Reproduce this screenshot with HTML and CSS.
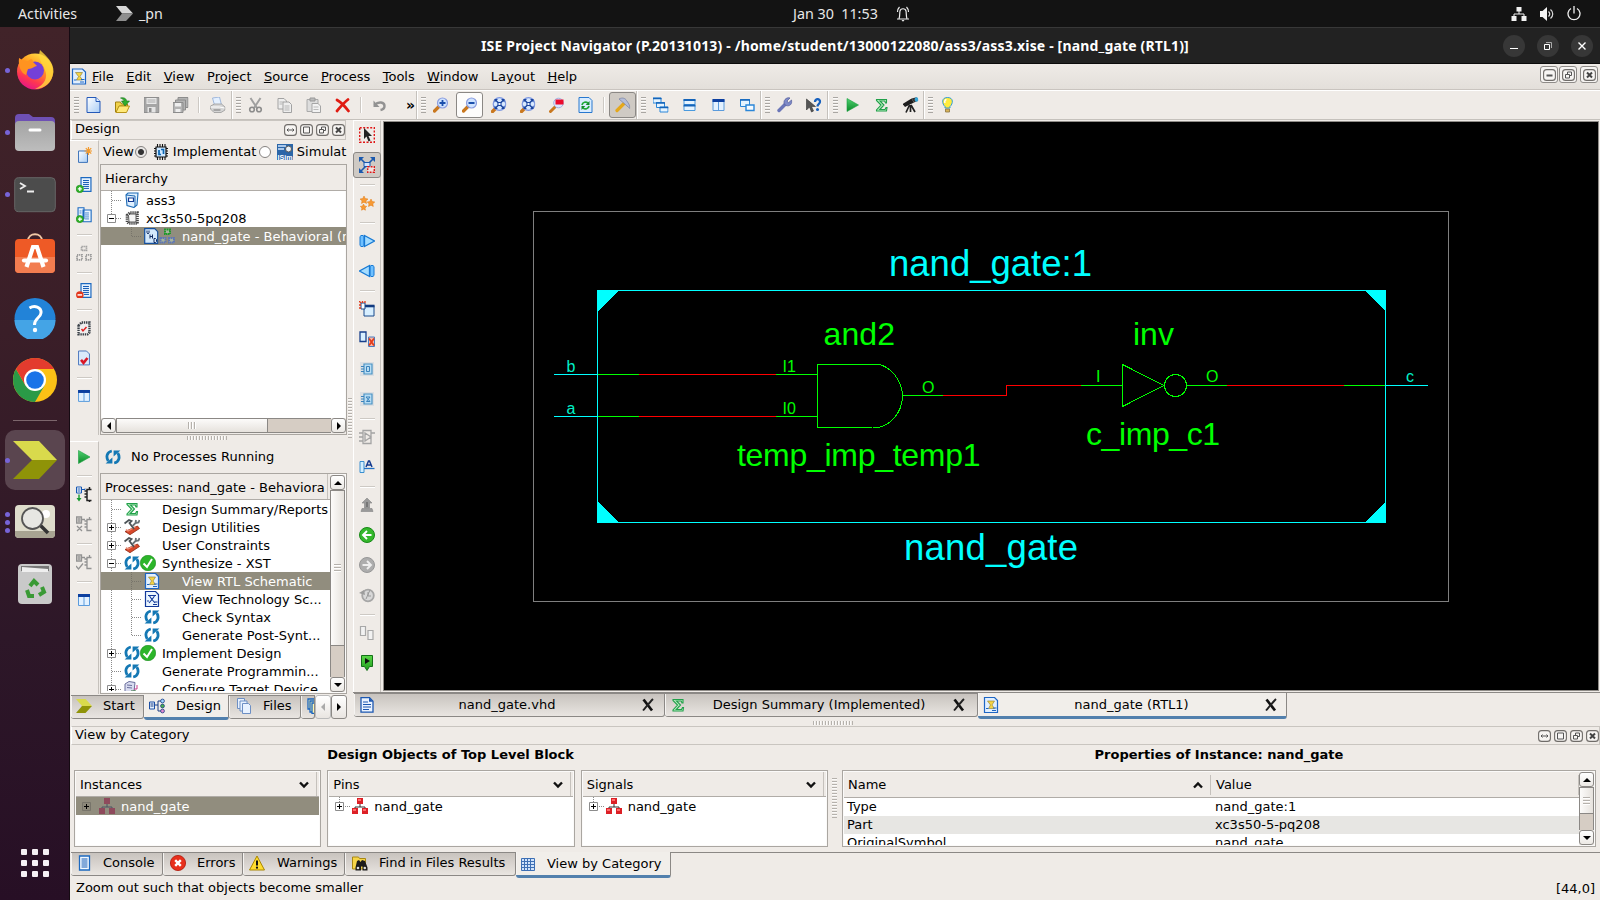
FILE: index.html
```html
<!DOCTYPE html>
<html lang="en">
<head>
<meta charset="utf-8">
<title>ISE Project Navigator</title>
<link rel="stylesheet" href="styles.css">
</head>
<body>
<svg class="defs" width="0" height="0">
<defs>
<linearGradient id="gPage" x1="0" y1="0" x2="1" y2="1"><stop offset="0" stop-color="#fff"/><stop offset="1" stop-color="#a9cdf5"/></linearGradient>
<linearGradient id="gGreen" x1="0" y1="0" x2="0" y2="1"><stop offset="0" stop-color="#5bd84a"/><stop offset="1" stop-color="#1f9a1c"/></linearGradient>
<linearGradient id="gTri" x1="0" y1="0" x2="0" y2="1"><stop offset="0" stop-color="#4fd070"/><stop offset="1" stop-color="#0a8a28"/></linearGradient>
<linearGradient id="gFox" x1="0.8" y1="0" x2="0.3" y2="1"><stop offset="0" stop-color="#ffe94a"/><stop offset=".4" stop-color="#ff9a1f"/><stop offset=".75" stop-color="#ff3750"/><stop offset="1" stop-color="#e3158a"/></linearGradient>
<linearGradient id="gGrey" x1="0" y1="0" x2="0" y2="1"><stop offset="0" stop-color="#a3a3a3"/><stop offset="1" stop-color="#bdbdbd"/></linearGradient>
</defs>
<symbol id="page" viewBox="0 0 16 16"><path d="M1.500.5h9l4 4v11h-13z" fill="url(#gPage)" stroke="#2459b8"/><path d="M10.500.5v4h4" fill="#dcebff" stroke="#2459b8"/></symbol>
<symbol id="open" viewBox="0 0 16 16"><path d="M1 5h5l1 2h6v2H5l-3 6H1z" fill="#f2d24a" stroke="#a08010"/><path d="M4.500 9h10.500l-3 6.500H1.500z" fill="#ffe979" stroke="#b8941a"/><path d="M6 1c4-1 6 1 6 3h3l-4.500 5L7 4h2.500C9.500 3 8 1.500 6 1z" fill="#2fae2f" stroke="#17751a" stroke-width=".6"/></symbol>
<symbol id="save" viewBox="0 0 16 16"><path d="M.5.5h15v15h-15z" fill="#a5a5a5" stroke="#8e8e8e"/><path d="M3 1h10v6H3z" fill="#e9e9e9"/><path d="M4 3h8M4 5h8" stroke="#aaa"/><path d="M4 10h8v5.500H4z" fill="#e4e4e4"/><path d="M5.500 11h2.500v4H5.500z" fill="#8e8e8e"/></symbol>
<symbol id="saveall" viewBox="0 0 16 16"><g fill="#b3b3b3" stroke="#8c8c8c"><path d="M5.500.5h10v10h-10z"/><path d="M3 3h10v10H3z"/><path d="M.5 5.500h10v10H.5z"/></g><path d="M2.500 6h6v3.500h-6zM3 12h5v3H3z" fill="#eee"/></symbol>
<symbol id="print" viewBox="0 0 16 16"><path d="M3 1l7-1 2 8H5z" fill="#e4f0ff" stroke="#8eabd6" stroke-width=".8"/><path d="M1 9l4-2h7l3.500 3v3l-4 2.500h-7L1 12z" fill="#d5d5d5" stroke="#999" stroke-width=".8"/><path d="M1 10h9l5 1" stroke="#fff" fill="none"/><path d="M4 13h7" stroke="#777"/></symbol>
<symbol id="cut" viewBox="0 0 16 16"><path d="M3 1l6.500 10M13 1L6.500 11" stroke="#a0a0a0" stroke-width="2" fill="none"/><circle cx="4.500" cy="12.500" r="2.300" fill="none" stroke="#8c8c8c" stroke-width="1.600"/><circle cx="11.500" cy="12.500" r="2.300" fill="none" stroke="#8c8c8c" stroke-width="1.600"/></symbol>
<symbol id="copy" viewBox="0 0 16 16"><g fill="#eee" stroke="#a2a2a2"><path d="M1.500 1.500h6l2.500 2.500v8h-8.500z"/><path d="M6.500 5h6l2.500 2.500v8H6.500z"/></g><path d="M3 5h4M3 7h3M8 9h5M8 11h5M8 13h5" stroke="#b5b5b5"/></symbol>
<symbol id="paste" viewBox="0 0 16 16"><path d="M1.500 2.500h11v12h-11z" fill="#ddd" stroke="#aaa"/><path d="M4.500 1h5v3h-5z" fill="#bbb" stroke="#999"/><path d="M6.500 6.500h6l2.500 2.500v6.500H6.500z" fill="#f2f2f2" stroke="#a5a5a5"/><path d="M8 10h5M8 12.500h5" stroke="#bbb"/></symbol>
<symbol id="del" viewBox="0 0 16 16"><path d="M2.500 3C6 5 11 10 14 14M13.500 2.500C9 6 5 11 2.500 14" stroke="#e01b12" stroke-width="2.800" stroke-linecap="round" fill="none"/></symbol>
<symbol id="undo" viewBox="0 0 16 16"><path d="M3 8c4-4 10-3 10 1 0 2-1.500 3.500-4 4" fill="none" stroke="#929292" stroke-width="2.400"/><path d="M2 3.500V10h6z" fill="#929292"/></symbol>
<symbol id="lens" viewBox="0 0 16 16"><path d="M6.500 9.500L2 14" stroke="#c9781f" stroke-width="3.200" stroke-linecap="round"/><circle cx="10" cy="6" r="5" fill="#cfe3ff" stroke="#8c9ee0" stroke-width="1.200"/></symbol>
<symbol id="zin" viewBox="0 0 16 16"><use href="#lens"/><path d="M7 6h6M10 3v6" stroke="#1b4fac" stroke-width="1.800"/></symbol>
<symbol id="zout" viewBox="0 0 16 16"><use href="#lens"/><path d="M7 6h6" stroke="#1b4fac" stroke-width="1.800"/></symbol>
<symbol id="zfull" viewBox="0 0 16 16"><path d="M5 11.500l-3 3" stroke="#c9781f" stroke-width="3.400" stroke-linecap="round"/><circle cx="9" cy="7" r="6.300" fill="#d8e9ff" stroke="#7c96e0" stroke-width="1.200"/><path d="M5 3l8 8M13 3l-8 8" stroke="#1c46a0" stroke-width="1.500"/><path d="M4 2h3.500L4 5.500zM14 2v3.500L10.500 2zM14 12h-3.500L14 8.500zM4 12V8.500L7.500 12z" fill="#1c46a0"/><path d="M7.500 5.500h3v3h-3z" fill="#e6f0ff" stroke="#1c46a0"/></symbol>
<symbol id="zbox" viewBox="0 0 16 16"><path d="M6.500 10L2 14.500" stroke="#c9781f" stroke-width="3" stroke-linecap="round"/><circle cx="10" cy="6" r="4.800" fill="#dbe6ff" stroke="#a2b2e0"/><path d="M7 2.500h8v5H7z" fill="#ec0a2c"/></symbol>
<symbol id="refreshpg" viewBox="0 0 16 16"><path d="M1.500.5h10l3 3v12h-13z" fill="#d9ecff" stroke="#2878cf"/><path d="M4.500 8c.5-3 4-3.800 6-1.800M11.500 9c-.5 3-4 3.800-6 1.800" stroke="#1fa83a" stroke-width="1.700" fill="none"/><path d="M12 4v4H8.200zM4 13V9h3.800z" fill="#138a2c"/></symbol>
<symbol id="hammer" viewBox="0 0 16 16"><path d="M9.500 6.500L2.500 13.500" stroke="#e5a81b" stroke-width="3.200" stroke-linecap="round"/><path d="M4.500 2C8 0 11 1.500 12 3.500c1.500 2 3.500 4.500 3.500 8l-3-2.500L8 5z" fill="#b4bdd8" stroke="#7680a0" stroke-width=".7"/></symbol>
<symbol id="cascade" viewBox="0 0 16 16"><g fill="#e6f4ff" stroke="#2b86d8"><path d="M.5 1h8v5h-8z"/><path d="M4 5.500h8v5H4z"/><path d="M7.500 10h8v5h-8z"/></g><path d="M0 1.500h9M3.500 6h9M7 10.500h9" stroke="#1463b8" stroke-width="1.600"/></symbol>
<symbol id="tileh" viewBox="0 0 16 16"><g fill="#e6f4ff" stroke="#4a9ade"><path d="M2.500 2.500h11v5h-11zM2.500 8.500h11v5h-11z"/></g><path d="M2 3h12M2 8.500h12" stroke="#1463b8" stroke-width="1.800"/></symbol>
<symbol id="tilev" viewBox="0 0 16 16"><path d="M2.500 2.500h11v11h-11z" fill="#e3f1ff" stroke="#5b9bdc"/><path d="M8 3v10" stroke="#5b9bdc"/><path d="M2 3.500h12" stroke="#0c3f9f" stroke-width="3"/></symbol>
<symbol id="float" viewBox="0 0 16 16"><path d="M1 2.500h9v7H1z" fill="#e6f4ff" stroke="#2b86d8"/><path d="M.5 3h10" stroke="#1463b8" stroke-width="1.600"/><path d="M6.500 8h8v5.500h-8z" fill="#f4faff" stroke="#2b86d8" stroke-width="1.400"/></symbol>
<symbol id="wrench" viewBox="0 0 16 16"><path d="M2.500 13.500L9 7" stroke="#6b76b8" stroke-width="3.400" stroke-linecap="round"/><path d="M13.500 1L10.500 4l1.500 1.800L15 3c1 3-1 6-4 5.800C7.500 8.500 6.500 5 8.500 2.500 9.700 1 12 .3 13.500 1z" fill="#7e8ac8" stroke="#505a9a" stroke-width=".7"/></symbol>
<symbol id="whats" viewBox="0 0 16 16"><path d="M1 2v11l3-3 2 5 2-1-2-4.500h4z" fill="#555" stroke="#333" stroke-width=".6"/><path d="M9.500 5c0-4 5.500-3.500 5 0-.2 2-2.500 2.200-2.500 4.500" stroke="#1760bd" stroke-width="2.300" fill="none"/><circle cx="12" cy="12.500" r="1.500" fill="#1760bd"/></symbol>
<symbol id="play" viewBox="0 0 16 16"><path d="M2.500 1.500L14 8 2.500 14.500z" fill="url(#gTri)" stroke="#19a040" stroke-width=".6"/></symbol>
<symbol id="sigma" viewBox="0 0 16 16"><path d="M3 2.500h10v3.500h-1l-.8-2H6.500l4 4-4.200 4.500h5.200l1-2H13.500l-.5 3.500H3v-1l4.500-5L3 3.500z" fill="#b8efc2" stroke="#22a04a" stroke-width="1.100"/></symbol>
<symbol id="scope" viewBox="0 0 16 16"><path d="M0 7l9-5.500 2.500 4L2.500 10z" fill="#1e1e1e"/><path d="M9 1.500L14 .2 15.800 3.500 11.500 5.500z" fill="#333"/><ellipse cx="14" cy="2.500" rx="1.800" ry="2.300" fill="#35a6d8"/><path d="M7 8l-3.500 7.500M8 8v7M8.500 8l4 7" stroke="#222" stroke-width="1.700"/></symbol>
<symbol id="bulb" viewBox="0 0 16 16"><path d="M8 .5C1.500.5 2.500 7 5.500 9.500V11h5V9.500C13.500 7 14.500.5 8 .5z" fill="#ffec3d" stroke="#2f9ad8"/><path d="M7 2.500C5 3 5 5 5.500 6" stroke="#fff" stroke-width="1.500" fill="none"/><path d="M6 12h4v3H6z" fill="#d8b45a" stroke="#8b7440" stroke-width=".8"/></symbol>
<symbol id="newsrc" viewBox="0 0 16 16"><path d="M2.500 4h9v11.500h-9z" fill="url(#gPage)" stroke="#3b72b8"/><path d="M12.500 0v8M8.500 4h8M9.800 1.200l5.500 5.500M15.300 1.200L9.800 6.700" stroke="#f29a2e" stroke-width="1.200"/></symbol>
<symbol id="doc" viewBox="0 0 16 16"><path d="M3.500 1h10v14h-10z" fill="#f4faff" stroke="#1c69c0" stroke-width="1.300"/><path d="M5.500 4h6M5.500 6h6M5.500 8h6M5.500 10h6M5.500 12h6" stroke="#1058b4"/></symbol>
<symbol id="addsrc" viewBox="0 0 16 16"><path d="M5 .7h10v13.800H5z" fill="#eaf5ff" stroke="#1c69c0" stroke-width="1.200"/><path d="M7 3.500h6M7 5.500h6M7 7.500h6M7 9.500h6M8 11.500h5" stroke="#1058b4"/><circle cx="3.800" cy="12" r="3.700" fill="#35b52d" stroke="#1c8c1a" stroke-width=".7"/><path d="M1.800 12h4M3.800 10v4" stroke="#fff" stroke-width="1.300"/></symbol>
<symbol id="addcopy" viewBox="0 0 16 16"><path d="M2 .8h6v11H2zM7 3h8.200v11.800H7z" fill="#eaf5ff" stroke="#1c69c0" stroke-width="1.100"/><path d="M9 6h4M9 8h4M9 10h4M9 12h4M3.500 4h2M3.500 6h2" stroke="#4d8ad0"/><circle cx="3.800" cy="12.200" r="3.600" fill="#35b52d" stroke="#1c8c1a" stroke-width=".7"/><path d="M2 12.200h4M3.800 10.200v4" stroke="#fff" stroke-width="1.300"/></symbol>
<symbol id="rmsrc" viewBox="0 0 16 16"><path d="M5 .7h10v13.800H5z" fill="#eaf5ff" stroke="#1c69c0" stroke-width="1.200"/><path d="M7 3.500h6M7 5.500h6M7 7.500h6M7 9.500h6M8 11.500h5" stroke="#1058b4"/><circle cx="3.800" cy="12" r="3.800" fill="#e2361c"/><path d="M1.500 12h4.600" stroke="#fff" stroke-width="1.500"/></symbol>
<symbol id="blocksg" viewBox="0 0 16 16"><g fill="none" stroke="#999" stroke-width="1.700" stroke-dasharray="1.300 .7"><path d="M5.500 1.500h5v4h-5zM1 10h5v5H1zM10 10h5v5h-5z"/></g></symbol>
<symbol id="chipchk" viewBox="0 0 16 16"><path d="M2.500 5.500l3-3h8v10l-2 2h-9z" fill="#eee" stroke="#3a4148" stroke-width="2.400" stroke-dasharray="1.400 .8"/><path d="M5.500 9l1.500 2 3.500-4" stroke="#e02020" stroke-width="1.500" fill="none"/></symbol>
<symbol id="pagechk" viewBox="0 0 16 16"><path d="M2.500 1h8l3 3v11h-11z" fill="#dbeafc" stroke="#5079be"/><path d="M5 10l2.500 3L11.500 8" stroke="#d91626" stroke-width="2.600" fill="none"/></symbol>
<symbol id="chip" viewBox="0 0 16 16"><path d="M3 3h10v10H3z" fill="#cfe8ff" stroke="#111" stroke-width="1.200"/><path d="M1 4.500h2M1 7h2M1 9.500h2M1 12h2M13 4.500h2M13 7h2M13 9.500h2M13 12h2M4.500 0v3M7 0v3M9.500 0v3M12 0v3M4.500 13v3M7 13v3M9.500 13v3M12 13v3" stroke="#111" stroke-width="1.100"/><path d="M6 6v4.500h2M8 5.500h2.500V10" stroke="#0a66b4" stroke-width="1.700" fill="none"/></symbol>
<symbol id="isim" viewBox="0 0 16 16"><path d="M0 0h16v16H0z" fill="#2b66a8"/><path d="M1 2h8M1 5h6" stroke="#d4e8ff" stroke-width="1.500"/><circle cx="11.500" cy="5" r="3" fill="#e8f0f8" stroke="#555"/><text x="8" y="15.500" font-size="8" font-weight="bold" text-anchor="middle" fill="#fff" font-family="Liberation Sans, sans-serif" textLength="15" lengthAdjust="spacingAndGlyphs">ISim</text></symbol>
<symbol id="proj" viewBox="0 0 16 16"><path d="M2 3l2-2h10l-1 12-3 2.500-7-2z" fill="#dff0ff" stroke="#1d6ab5" stroke-width="1.100"/><path d="M2 3l9 1v11" stroke="#1d6ab5" fill="none"/><path d="M4.500 6h5v3.500h-5z" fill="#fff" stroke="#123a94" stroke-width="1.200"/></symbol>
<symbol id="dev" viewBox="0 0 16 16"><path d="M3 5l3-2.500h7.500v11h-9L3 12z" fill="#fff" stroke="#474747" stroke-width="2.600" stroke-dasharray="1.300 .8"/><path d="M4.500 5.500L6 4h6v8H5z" fill="#f6f6f6" stroke="#333" stroke-width=".8"/></symbol>
<symbol id="vhd" viewBox="0 0 31 16"><path d="M.7.700h10l3 3v11.600H.7z" fill="#d4e9fc" stroke="#14509e" stroke-width="1.200"/><path d="M3 2.500v2l1 1.500 1-1.500v-2M6 6.500v4M6 8.500h2.500M8.500 6.500v4M10 10.500v4h1.500l1-1v-2l-1-1z" stroke="#102a60" fill="none"/><g fill="#a9b49c" stroke-width="2" stroke-dasharray="1.500 .5"><path d="M21 1.500h5v4.500h-5z" stroke="#1f9a2a"/><path d="M16.500 10h5v4.500h-5zM25 10h5v4.500h-5z" stroke="#5f77b4"/></g></symbol>
<symbol id="loop" viewBox="0 0 16 16"><path d="M6.800 2C1.800 3 .8 8 3.200 12M9.200 14c5-1 6-6 3.600-10" stroke="#1478b4" stroke-width="2.800" fill="none"/><path d="M.6 14.600h6.800V8.400zM15.400 1.400H8.600v6.200z" fill="#1478b4"/></symbol>
<symbol id="ok" viewBox="0 0 16 16"><circle cx="8" cy="8" r="7.700" fill="#2cb52a" stroke="#168a18" stroke-width=".6"/><path d="M3.500 8.500L7 12l5-8" stroke="#fff" stroke-width="2" fill="none"/></symbol>
<symbol id="tools" viewBox="0 0 16 16"><path d="M1 12.500L13.500 7l2 2.500-9.500 6.200z" fill="#d8482a" stroke="#8f2a14" stroke-width=".8"/><path d="M2 10.500l2 1.500 8-4.500" stroke="#f09078" stroke-width="1.300" fill="none"/><path d="M.5 4.500L5 1l2.500 1L5.500 4l4.500 6" stroke="#4c5357" stroke-width="1.800" fill="none"/><path d="M8.500 7l3-3 3-.5L15.500 1M11.500 4l.5-3" stroke="#6a7175" stroke-width="1.800" fill="none"/></symbol>
<symbol id="rtl" viewBox="0 0 16 16"><path d="M1.500.5h10l3 3v12h-13z" fill="#e1effe" stroke="#1e66c4" stroke-width="1.200"/><path d="M4.500 4h7L9 8l2.500 3.500h-6L7.500 8z" fill="#f5d344" stroke="#8a7a30" stroke-width=".6"/><path d="M3 11.500h2.500M10 11h3.500M9 13.500h4" stroke="#1e66c4"/></symbol>
<symbol id="tech" viewBox="0 0 16 16"><path d="M1.500.5h10l3 3v12h-13z" fill="#eaf5ff" stroke="#12389a" stroke-width="1.200"/><path d="M4 4.500h8M5.500 5L8 8.500 10.500 5M8 8.500l3 3.500M8 8.500L5 12M3 10h2M10 11h3.500M9 13.500h4" stroke="#12389a" stroke-width="1.100" fill="none"/></symbol>
<symbol id="target" viewBox="0 0 16 16"><path d="M1 3l4-2.500 6 1-1 9-5 2-4-1z" fill="#d9dcf0" stroke="#6a6f9c"/><path d="M3 4l5 .5M3 6.500l5 .5" stroke="#6a6f9c"/><path d="M10 8h3V4" stroke="#c73a8a" fill="none"/><path d="M7 10h5v5H7z" fill="#4fae4a" stroke="#2a702a"/></symbol>
<symbol id="implrun" viewBox="0 0 16 16"><path d="M.5 1h5v6h-5z" fill="#fff" stroke="#1657b2"/><path d="M1.500 3h3M1.500 5h3M6 3.500h3v-1" stroke="#1657b2" fill="none"/><path d="M3 8.500v5" stroke="#179a30" stroke-width="1.400"/><path d="M.5 12h5L3 15.500z" fill="#179a30"/><path d="M15.500 3.500H11v11h4.500M8.500 5H11M8.500 8H11M8.500 11H11M13.500 1v2M13.500 15v1" stroke="#222" stroke-width="1.500" fill="none"/></symbol>
<symbol id="implx" viewBox="0 0 16 16"><path d="M.5 1h5v6h-5zM1.500 3h3M1.500 5h3M6 3.500h3M1 10l5 5M6 10l-5 5M15.500 3.500H11v11h4.500M8.500 5H11M8.500 8H11M8.500 11H11M13.500 1v2" stroke="#929292" stroke-width="1.300" fill="none"/></symbol>
<symbol id="implc" viewBox="0 0 16 16"><path d="M.5 1h5v6h-5zM1.500 3h3M1.500 5h3M6 3.500h3M0 12l2.500 3L7 9.500M15.500 3.500H11v11h4.500M8.500 5H11M8.500 8H11M8.500 11H11M13.500 1v2" stroke="#929292" stroke-width="1.300" fill="none"/></symbol>
<symbol id="chev" viewBox="0 0 16 16"><path d="M0 1h9.500L16 8H6z" fill="#d9da4c"/><path d="M6 8h10l-6.500 7H0z" fill="#8f9308"/></symbol>
<symbol id="hier" viewBox="0 0 16 16"><path d="M.5 4h5v7h-5z" fill="#e5f1ff" stroke="#1c4fa5"/><path d="M1.500 6h3M1.500 8h3M6 7h3M9 3v10M9 3h3M9 13h3" stroke="#1c3f85" fill="none"/><circle cx="13.500" cy="3" r="1.900" fill="#9fd3ff" stroke="#1c3f85" stroke-width=".8"/><circle cx="13.500" cy="8" r="1.900" fill="#4bb04b" stroke="#1c3f85" stroke-width=".8"/><circle cx="13.500" cy="13" r="1.900" fill="#e08ad0" stroke="#1c3f85" stroke-width=".8"/></symbol>
<symbol id="files" viewBox="0 0 16 16"><g fill="#e8f2ff" stroke="#6d8fc4"><path d="M1.500.5h7v10h-7z"/><path d="M4 3h7v10H4z"/><path d="M6.500 5.500h6l2 2v8h-8z"/></g></symbol>
<symbol id="libs" viewBox="0 0 8 16"><g fill="#fff7b0" stroke="#1763c0" stroke-width="1.300"><path d="M1 1h8v10H1z"/><path d="M3 3h8v11H3z"/><path d="M5 5h8v10.500H5z"/></g></symbol>
<symbol id="red3" viewBox="0 0 16 16"><path d="M8 5v4M3 12V9h10v3" stroke="#333" fill="none"/><path d="M5 0h6v6H5zM0 10h6v6H0zM10 10h6v6h-6z" fill="#dc2026"/><path d="M6 1h3v2H6zM1 11h3v2H1zM11 11h3v2h-3z" fill="#ff6b6b"/></symbol>
<symbol id="red3d" viewBox="0 0 16 16"><path d="M8 5v4M3 12V9h10v3" stroke="#4b5563" fill="none"/><path d="M5 0h6v6H5zM0 10h6v6H0zM10 10h6v6h-6z" fill="#8e4a5c"/></symbol>
<symbol id="err" viewBox="0 0 16 16"><circle cx="8" cy="8" r="7.600" fill="#e8301c" stroke="#b01408" stroke-width=".8"/><path d="M5.200 5.200l5.600 5.600M10.800 5.200l-5.600 5.600" stroke="#fff" stroke-width="2.400"/></symbol>
<symbol id="warn" viewBox="0 0 16 16"><path d="M8 1L15.500 15H.5z" fill="#ffdc2e" stroke="#a98600"/><path d="M8 5.500v5" stroke="#111" stroke-width="2"/><circle cx="8" cy="12.700" r="1.100" fill="#111"/></symbol>
<symbol id="find" viewBox="0 0 16 16"><path d="M.5 2h6l1 1.500h6V14H.5z" fill="#f6d548" stroke="#a88712"/><path d="M5 6l2-1 1.500 2L10 5l3 1 2.500 6.500v3h-5v-4H9v4H3.500v-3z" fill="#1b1b1b"/><circle cx="6" cy="13" r="1.300" fill="#ddd"/><circle cx="12.800" cy="13" r="1.300" fill="#ddd"/></symbol>
<symbol id="gridic" viewBox="0 0 16 16"><path d="M1.500 2.500h13v12h-13z" fill="#cfe2fb" stroke="#3d6fb4"/><path d="M4.500 2v12.500M7.500 2v12.500M10.500 2v12.500M1 5.500h13.500M1 8.500h13.500M1 11.500h13.500" stroke="#3d6fb4"/></symbol>
<symbol id="vdoc" viewBox="0 0 16 16"><path d="M2 .7h8.500l3.500 3.500v11H2z" fill="#eaf3ff" stroke="#1c57b0" stroke-width="1.300"/><path d="M10 .7v4h4z" fill="#1c57b0"/><path d="M4 5h5M4 7.500h8M4 10h8M4 12.500h6" stroke="#1c57b0"/></symbol>
<symbol id="closex" viewBox="0 0 14 14"><path d="M2.500 1.500L11 12.500" stroke="#111" stroke-width="2.700"/><path d="M12 1C9 4 5 9 2 12.500" stroke="#222" stroke-width="1.900" fill="none"/></symbol>
<symbol id="selarr" viewBox="0 0 16 16"><path d="M.7.700h14.600v14.600H.7z" fill="none" stroke="#e01818" stroke-width="1.400" stroke-dasharray="2 1.500"/><path d="M5 1v11l2.500-2.500 2 5 2-1-2-4.500H13z" fill="#222"/></symbol>
<symbol id="zoomsel" viewBox="0 0 16 16"><path d="M2 2l11 11M14 2L2 14" stroke="#1b59ad" stroke-width="1.600"/><path d="M0 0h5L0 5zM16 0v5l-5-5zM0 16v-5l5 5z" fill="#1b59ad"/><path d="M5 5.500h6v4H5z" fill="#cfe4ff" stroke="#1b59ad"/><path d="M8.700 9.700h6.600v5.600H8.700z" fill="#f0e4e0" stroke="#e01818" stroke-width="1.400" stroke-dasharray="1.800 1.200"/></symbol>
<symbol id="stars" viewBox="0 0 16 16"><g fill="#f79a35" stroke="#e07a14" stroke-width=".5"><path d="M5 1l1.200 2.500L9 4 7 5.800 7.500 8.500 5 7.200 2.500 8.500 3 5.800 1 4l2.800-.5z"/><path d="M12 4l1.200 2.500 2.600.5-2 1.800.5 2.700-2.300-1.300-2.500 1.300.5-2.700L8.200 7l2.600-.5z"/><path d="M4.500 9l1 2 2.200.4-1.700 1.500.5 2.300-2-1-2 1 .4-2.300L1.300 11.400 3.500 11z"/></g></symbol>
<symbol id="fwd" viewBox="0 0 16 16"><path d="M1 3.500C2 2 4 2 5 3.500v9C4 14 2 14 1 12.500z" fill="#6fc0ff" stroke="#1779d4"/><path d="M5.500 2.500L15.500 8 5.500 13.500z" fill="#a4dcff" stroke="#1779d4" stroke-width="1.300"/></symbol>
<symbol id="newwin" viewBox="0 0 16 16"><path d="M5 4.500h10V15H5z" fill="#d8efff" stroke="#1b4a8c"/><path d="M4.500 5h11" stroke="#123a80" stroke-width="2.600"/><path d="M2 2h4v6H2z" fill="#fff" stroke="#1b4a8c"/><path d="M0 0l2 2M3.500 0v2M6 0v2M0 4h2M0 7h2" stroke="#e23a1a" stroke-width="1.300"/></symbol>
<symbol id="delwin" viewBox="0 0 16 16"><path d="M1 1h6v9.500H1z" fill="#d8efff" stroke="#173f8c" stroke-width="1.300"/><path d="M9.500 6h6v9.500h-6z" fill="#f7b9a8" stroke="#4b7ec0"/><path d="M10 7.500l5 7M15 7.500l-5 7" stroke="#e23a1a" stroke-width="1.700"/></symbol>
<symbol id="sym1" viewBox="0 0 16 16"><path d="M1 1h14v14H1z" fill="#dcdfe2"/><path d="M5 3h8v10H5z" fill="#b9ddf4" stroke="#4b93c4" stroke-width="1.200"/><path d="M7.500 5.500h3v5h-3zM2 5.500h3M2 8h3M2 10.500h3" stroke="#3b83bc" fill="none"/></symbol>
<symbol id="sym2" viewBox="0 0 16 16"><path d="M1 1h14v14H1z" fill="#dcdfe2"/><path d="M5 3h8v10H5z" fill="#b9ddf4" stroke="#4b93c4" stroke-width="1.200"/><path d="M7 6h4L7.500 10.500H11M7 6l4 4.500M2 5.500h3M2 8h3M2 10.500h3" stroke="#3b83bc" fill="none"/></symbol>
<symbol id="gateg" viewBox="0 0 16 16"><path d="M4 1.500h8v13H4zM6 4v8l6-4zM0 4h4M0 8h4M0 12h4M12 4h4" stroke="#a4a4a4" stroke-width="1.300" fill="none"/></symbol>
<symbol id="texta" viewBox="0 0 16 16"><path d="M1 2.500h4v11H1z" fill="#d4efff" stroke="#3a8fd0"/><path d="M5 9.500h10.500" stroke="#2372c6" stroke-width="1.300"/><path d="M7 8l2.500-6h1L13 8M8 6h4" stroke="#163c90" stroke-width="1.500" fill="none"/></symbol>
<symbol id="upg" viewBox="0 0 16 16"><path d="M8 1l5 5h-2.500v5h-5V6H3zM3 11.500h10l1 3H2z" fill="#9a9a9a" stroke="#858585" stroke-width=".6"/><path d="M7 5h2v5H7z" fill="#777"/></symbol>
<symbol id="back" viewBox="0 0 16 16"><circle cx="8" cy="8" r="7.500" fill="#35b82c" stroke="#188a18"/><path d="M12.500 8h-8M8 4L4 8l4 4" stroke="#fff" stroke-width="1.900" fill="none"/></symbol>
<symbol id="fwdg" viewBox="0 0 16 16"><circle cx="8" cy="8" r="7.500" fill="#adadad" stroke="#979797"/><path d="M3.500 8h8M8 4l4 4-4 4" stroke="#eee" stroke-width="1.900" fill="none"/></symbol>
<symbol id="histg" viewBox="0 0 16 16"><circle cx="9" cy="8.500" r="5.800" fill="#d8d8d8" stroke="#a6a6a6" stroke-width="1.800"/><path d="M9 5v4h3M11 3L7 12" stroke="#999" fill="none"/><path d="M0 6l5-3 1 5z" fill="#9c9c9c"/></symbol>
<symbol id="pairg" viewBox="0 0 16 16"><path d="M1.500 1.500h5v9h-5zM9 5.500h5v9H9z" fill="#f2f2f2" stroke="#a8a8a8" stroke-width="1.200"/></symbol>
<symbol id="mark" viewBox="0 0 16 16"><path d="M2.500.5h11v11h-3L8 15.500 5.500 11.500h-3z" fill="url(#gGreen)" stroke="#147018"/><path d="M6 3l5 3-5 3z" fill="#111"/></symbol>
<symbol id="arrL" viewBox="0 0 8 8"><path d="M6 0v8L2 4z"/></symbol>
<symbol id="arrR" viewBox="0 0 8 8"><path d="M2 0v8l4-4z"/></symbol>
<symbol id="arrU" viewBox="0 0 8 8"><path d="M0 6h8L4 2z"/></symbol>
<symbol id="arrD" viewBox="0 0 8 8"><path d="M0 2h8L4 6z"/></symbol>
<symbol id="vdown" viewBox="0 0 10 8"><path d="M1 1.500L5 5.500 9 1.500" stroke="#111" stroke-width="2.400" fill="none"/></symbol>
<symbol id="vup" viewBox="0 0 10 8"><path d="M1 6.500L5 2.500 9 6.500" stroke="#111" stroke-width="2.400" fill="none"/></symbol>
<!-- dock-panel title buttons -->
<symbol id="bfr" viewBox="0 0 13 12"><rect x=".6" y=".6" width="11.800" height="10.800" rx="3" fill="#f7f5f3" stroke="#6f6c69" stroke-width="1.100"/></symbol>
<symbol id="b1" viewBox="0 0 13 12"><use href="#bfr"/><path d="M3 6h7M4.500 4.500L3 6l1.500 1.500M8.500 4.500L10 6 8.500 7.500" stroke="#555" fill="none"/></symbol>
<symbol id="b2" viewBox="0 0 13 12"><use href="#bfr"/><path d="M3.500 3h6v6h-6z" stroke="#555" fill="none"/></symbol>
<symbol id="b3" viewBox="0 0 13 12"><use href="#bfr"/><path d="M3.500 5.500h4v3.500h-4zM5.500 5V3h4v3.500h-2" stroke="#555" fill="none"/></symbol>
<symbol id="b4" viewBox="0 0 13 12"><use href="#bfr"/><path d="M4 3.500l5 5M9 3.500l-5 5" stroke="#444" stroke-width="2"/></symbol>
<symbol id="b5" viewBox="0 0 13 12"><use href="#bfr"/><path d="M3.500 6.500h6" stroke="#555" stroke-width="2"/></symbol>
<!-- tree branches -->
<symbol id="tl" viewBox="0 0 24 18"><path d="M10.500 0v18M11 9.500h9" stroke="#8a8a8a" stroke-dasharray="1 1" fill="none"/></symbol>
<symbol id="tp" viewBox="0 0 24 18"><use href="#tl"/><path d="M6.500 5.500h8v8h-8z" fill="#fff" stroke="#8c8c8c"/><path d="M8 9.500h5M10.500 7v5" stroke="#000"/></symbol>
<symbol id="tm" viewBox="0 0 24 18"><use href="#tl"/><path d="M6.500 5.500h8v8h-8z" fill="#fff" stroke="#8c8c8c"/><path d="M8 9.500h5" stroke="#000"/></symbol>
<symbol id="tme" viewBox="0 0 24 18"><path d="M10.500 0v9M11 9.500h9" stroke="#8a8a8a" stroke-dasharray="1 1" fill="none"/><path d="M6.500 5.500h8v8h-8z" fill="#fff" stroke="#8c8c8c"/><path d="M8 9.500h5" stroke="#000"/></symbol>
<symbol id="t2" viewBox="0 0 44 18"><path d="M10.500 0v18M30.500 0v18M31 9.500h9" stroke="#8a8a8a" stroke-dasharray="1 1" fill="none"/></symbol>
<symbol id="t2s" viewBox="0 0 44 18"><path d="M30.500 0v18M31 9.500h9" stroke="#77746a" stroke-dasharray="1 1" fill="none"/></symbol>
<symbol id="t2e" viewBox="0 0 44 18"><path d="M30.500 0v10M31 9.500h9" stroke="#77746a" stroke-dasharray="1 1" fill="none"/></symbol>
<symbol id="t2l" viewBox="0 0 44 18"><path d="M10.500 0v18M30.500 0v10M31 9.500h9" stroke="#8a8a8a" stroke-dasharray="1 1" fill="none"/></symbol>
<symbol id="tv" viewBox="0 0 22 18"><path d="M10.500 0v6M16 9.500h5" stroke="#8a8a8a" stroke-dasharray="1 1"/><path d="M6.500 5.500h8v8h-8z" fill="#fff" stroke="#8c8c8c"/><path d="M8 9.500h5M10.500 7v5" stroke="#000"/></symbol>
<symbol id="tvs" viewBox="0 0 22 18"><path d="M6.500 5.500h8v8h-8z" fill="#8c887a" stroke="#77746a"/><path d="M8 9.500h5M10.500 7v5" stroke="#000"/></symbol>
</svg>

<header class="topbar">
  <span class="activities">Activities</span>
  <svg class="appmark" width="17" height="15" viewBox="0 0 17 15"><path d="M0 0h10l7 7.500H6z" fill="#d6d6d6"/><path d="M6 7.500h11L10 15H0z" fill="#8e8e8e"/></svg>
  <span class="appname">_pn</span>
  <span class="clock">Jan 30&nbsp; 11:53</span>
  <svg class="bell" width="14" height="16" viewBox="0 0 14 16"><path d="M1 13h12M3 12.500c1-2 .5-5 1-7.500C4.500 2 9.500 2 10 5c.5 2.500 0 5.500 1 7.500M1.500 6C1.500 4 2 2.500 3.500 1M12.500 6c0-2-.5-3.500-2-5" stroke="#eee" stroke-width="1.200" fill="none"/><path d="M5.500 14h3L7 15.800z" fill="#eee"/></svg>
  <span class="tray">
    <svg width="16" height="14" viewBox="0 0 16 14"><path d="M5.500 0h5v4.500h-5zM.5 9h5v5h-5zM10.500 9h5v5h-5z" fill="#f2f2f2"/><path d="M8 4v3M3 9V7h10v2" stroke="#f2f2f2" fill="none"/></svg>
    <svg width="16" height="14" viewBox="0 0 16 14"><path d="M1 4h2.500L8 0v14L3.500 10H1z" fill="#f2f2f2"/><path d="M9.500 4.500c1.500 1.500 1.500 3.500 0 5M11.500 2.500c3 2.500 3 6.500 0 9" stroke="#ddd" stroke-width="1.200" fill="none"/></svg>
    <svg width="14" height="15" viewBox="0 0 14 15"><path d="M4 2.500a6 6 0 1 0 6 0M7 0v7.500" stroke="#f2f2f2" stroke-width="1.300" fill="none"/></svg>
  </span>
</header>

<div class="shell">
<nav class="dock">
  <div class="di"><i class="dots"><b></b></i><svg width="40" height="40" viewBox="0 0 40 40"><circle cx="20" cy="21.500" r="18" fill="url(#gFox)"/><path d="M25 0c6 6 14 12 13.500 22C37 34 28 39 20 39c10-4 13-12 10-19C28 14 22 9 25 0z" fill="#ffd83c" opacity=".8"/><circle cx="20" cy="20.500" r="9" fill="#7440d8"/><path d="M4 8c3 2 6 3 9 3 3-3 5-2 5 1l4 4c-3 0-4 3-9 3l-2 6C6 23 3 16 4 8z" fill="#ff9320"/></svg></div>
  <div class="di dn"><i class="dots"><b></b></i><svg width="42" height="38" viewBox="0 0 42 38"><path d="M1 4q0-4 4-4h10l4 3h18q4 0 4 4v10H1z" fill="#6e50b4"/><rect x="1" y="7" width="40" height="30" rx="4" fill="url(#gGrey)"/><path d="M16 16h10" stroke="#fff" stroke-width="3" stroke-linecap="round"/></svg></div>
  <div class="di dn"><i class="dots"><b></b></i><svg width="42" height="36" viewBox="0 0 42 36"><rect x=".7" y=".7" width="40.600" height="34" rx="4" fill="#4c4c4c" stroke="#666"/><path d="M6 6l5 3-5 3M13 14.500h7" stroke="#eee" stroke-width="1.800" fill="none"/></svg></div>
  <div class="di up"><svg width="42" height="42" viewBox="0 0 42 42"><path d="M14 8c0-9 14-9 14 0" stroke="#f1c8a6" stroke-width="2" fill="none"/><rect x="1" y="6" width="40" height="34" rx="4" fill="#ee5a26"/><path d="M1 24h40v12q0 4-4 4H5q-4 0-4-4z" fill="#f27d50"/><path d="M12.500 34l6.500-20h4l6.500 20" stroke="#fff" stroke-width="4.200" fill="none"/><path d="M10 27.500h22" stroke="#fff" stroke-width="4.200" stroke-linecap="round"/></svg></div>
  <div class="di"><svg width="42" height="42" viewBox="0 0 42 42"><circle cx="21" cy="21.500" r="20.500" fill="#2283d8"/><path d="M.5 23h41A20.500 20.500 0 0 1 .5 23z" fill="#44a4e6"/><path d="M15.500 11c5-3 12-1 11.500 5-.5 5-6.500 5-6.500 12" stroke="#fff" stroke-width="3" fill="none"/><circle cx="21" cy="33" r="2.200" fill="#fff"/></svg></div>
  <div class="di"><svg width="44" height="44" viewBox="0 0 44 44"><circle cx="22" cy="22" r="22" fill="#fbc116"/><path d="M3 11A22 22 0 0 1 41 11H22z" fill="#e33b2e"/><path d="M3 11A22 22 0 0 0 22 44L31.500 27.500 12.500 27.500z" fill="#2a9a47"/><path d="M3 11L12.500 27.500 22 11z" fill="#e33b2e"/><circle cx="22" cy="22" r="11" fill="#fff"/><circle cx="22" cy="22" r="8.800" fill="#1a73e8"/></svg></div>
  <hr class="dsep">
  <div class="di act"><i class="dots"><b></b></i><svg width="44" height="38" viewBox="0 0 44 38"><path d="M0 0h26l18 19H19z" fill="#d9da4c"/><path d="M19 19h25L26 38H0z" fill="#8f9308"/></svg></div>
  <div class="di"><i class="dots"><b></b><b></b><b></b></i><svg width="42" height="36" viewBox="0 0 42 36"><rect x="1" y="1" width="40" height="33" rx="4" fill="#dedccb"/><path d="M1 27h40v3q0 4-4 4H5q-4 0-4-4z" fill="#a8a492"/><circle cx="32" cy="10" r="4" fill="#fff"/><path d="M26 21l8 8" stroke="#333" stroke-width="3.500"/><circle cx="18.500" cy="14.500" r="10.500" fill="#e7e7e3" stroke="#555" stroke-width="1.800"/></svg></div>
  <div class="di"><svg width="36" height="42" viewBox="0 0 36 42"><rect x="1" y="1" width="34" height="40" rx="4" fill="#c9c9c9"/><path d="M4 3h28v5H4z" fill="#777"/><path d="M5 4l26 2v3H5z" fill="#eee"/><g stroke="#3a9a35" stroke-width="4" fill="none"><path d="M13 23l4-5 4 4M25 24l2 5-5 3M17 33h-5l-2-6"/></g></svg></div>
  <div class="di apps"><svg width="28" height="28" viewBox="0 0 28 28" fill="#f5f0f4"><g id="dr"><rect width="6" height="6" rx="1"/><rect x="11" width="6" height="6" rx="1"/><rect x="22" width="6" height="6" rx="1"/></g><use href="#dr" y="11"/><use href="#dr" y="22"/></svg></div>
</nav>

<main class="window">
  <div class="titlebar"><span class="ttl">ISE Project Navigator (P.20131013) - /home/student/13000122080/ass3/ass3.xise - [nand_gate (RTL1)]</span>
    <span class="wbtns">
      <svg width="22" height="22" viewBox="0 0 22 22"><circle cx="11" cy="11" r="11" fill="#373737"/><path d="M7 13.500h8" stroke="#fff"/></svg>
      <svg width="22" height="22" viewBox="0 0 22 22"><circle cx="11" cy="11" r="11" fill="#373737"/><path d="M7.500 9.500h5v5h-5z" stroke="#fff" fill="none"/><path d="M9 7.500h5.500V13" stroke="#aaa" fill="none"/></svg>
      <svg width="22" height="22" viewBox="0 0 22 22"><circle cx="11" cy="11" r="11" fill="#373737"/><path d="M7.500 7.500l7 7M14.500 7.500l-7 7" stroke="#fff" stroke-width="1.400"/></svg>
    </span></div>
  <div class="menubar">
    <svg class="mic" width="16" height="17"><use href="#rtl"/></svg>
    <span><u>F</u>ile</span><span><u>E</u>dit</span><span><u>V</u>iew</span><span>P<u>r</u>oject</span><span><u>S</u>ource</span><span><u>P</u>rocess</span><span><u>T</u>ools</span><span><u>W</u>indow</span><span>La<u>y</u>out</span><span><u>H</u>elp</span>
    <div class="mdi"><b><svg width="13" height="12"><use href="#b5"/></svg></b><b><svg width="13" height="12"><use href="#b3"/></svg></b><b><svg width="13" height="12"><use href="#b4"/></svg></b></div>
  </div>
  <div class="toolbar">
    <div class="tg w1"><i class="grip"></i><svg><use href="#page"/></svg><svg><use href="#open"/></svg><svg><use href="#save"/></svg><svg><use href="#saveall"/></svg><i class="vs"></i><svg><use href="#print"/></svg></div>
    <div class="tg w2"><i class="grip"></i><svg><use href="#cut"/></svg><svg><use href="#copy"/></svg><svg><use href="#paste"/></svg><svg><use href="#del"/></svg><i class="vs"></i><svg><use href="#undo"/></svg><b class="more">»</b></div>
    <div class="tg w3"><i class="grip"></i><svg><use href="#zin"/></svg><svg class="hot"><use href="#zout"/></svg><svg><use href="#zfull"/></svg><svg><use href="#zfull"/></svg><svg><use href="#zbox"/></svg><svg><use href="#refreshpg"/></svg><i class="vs"></i><svg class="on"><use href="#hammer"/></svg></div>
    <div class="tg w4"><i class="grip"></i><svg><use href="#cascade"/></svg><svg><use href="#tileh"/></svg><svg><use href="#tilev"/></svg><svg><use href="#float"/></svg></div>
    <div class="tg w5"><i class="grip"></i><svg><use href="#wrench"/></svg><svg><use href="#whats"/></svg></div>
    <div class="tg w6"><i class="grip"></i><svg><use href="#play"/></svg><svg><use href="#sigma"/></svg><svg><use href="#scope"/></svg></div>
    <div class="tg w7"><i class="grip"></i><svg><use href="#bulb"/></svg></div>
  </div>

  <div class="work">
    <section class="left">
      <div class="ptitle"><span>Design</span><div class="pb"><svg><use href="#b1"/></svg><svg><use href="#b2"/></svg><svg><use href="#b3"/></svg><svg><use href="#b4"/></svg></div></div>
      <div class="upper">
        <div class="strip s1">
          <svg><use href="#newsrc"/></svg><svg><use href="#addsrc"/></svg><svg><use href="#addcopy"/></svg><i></i><svg><use href="#blocksg"/></svg><i></i><svg><use href="#rmsrc"/></svg><i></i><svg><use href="#chipchk"/></svg><svg><use href="#pagechk"/></svg><i></i><svg><use href="#tilev"/></svg>
        </div>
        <div class="pane">
          <div class="viewrow"><span>View</span><em class="radio sel"></em><svg class="ic"><use href="#chip"/></svg><span class="v1">Implementat</span><em class="radio"></em><svg class="ic c2"><use href="#isim"/></svg><span class="v2">Simulat</span></div>
          <div class="box hbox">
            <div class="head hh">Hierarchy</div>
            <div class="tree">
              <div class="row"><svg class="b"><use href="#tl"/></svg><svg class="ic g21"><use href="#proj"/></svg>ass3</div>
              <div class="row"><svg class="b"><use href="#tme"/></svg><svg class="ic g21"><use href="#dev"/></svg>xc3s50-5pq208</div>
              <div class="row seld"><svg class="b b2"><use href="#t2e"/></svg><svg class="ic vh"><use href="#vhd"/></svg>nand_gate - Behavioral (n</div>
            </div>
            <div class="hsb"><b><svg><use href="#arrL"/></svg></b><div class="hth"><i></i></div><div class="trk"></div><b class="r"><svg><use href="#arrR"/></svg></b></div>
          </div>
        </div>
      </div>
      <div class="hgrip up1"></div>
      <div class="lower">
        <div class="strip s2">
          <svg><use href="#play"/></svg><i></i><svg><use href="#implrun"/></svg><svg><use href="#implx"/></svg><i></i><svg><use href="#implc"/></svg><i></i><svg><use href="#tilev"/></svg>
        </div>
        <div class="pane">
          <div class="status"><svg class="ic"><use href="#loop"/></svg><span>No Processes Running</span></div>
          <div class="box pbox">
            <div class="plist">
              <div class="head hs">Processes: nand_gate - Behaviora</div>
              <div class="tree">
                <div class="row"><svg class="b"><use href="#tl"/></svg><svg class="ic g37"><use href="#sigma"/></svg>Design Summary/Reports</div>
                <div class="row"><svg class="b"><use href="#tp"/></svg><svg class="ic g37"><use href="#tools"/></svg>Design Utilities</div>
                <div class="row"><svg class="b"><use href="#tp"/></svg><svg class="ic g37"><use href="#tools"/></svg>User Constraints</div>
                <div class="row"><svg class="b"><use href="#tm"/></svg><svg class="ic"><use href="#loop"/></svg><svg class="ic okk"><use href="#ok"/></svg>Synthesize - XST</div>
                <div class="row seld"><svg class="b b2"><use href="#t2s"/></svg><svg class="ic g37"><use href="#rtl"/></svg>View RTL Schematic</div>
                <div class="row"><svg class="b b2"><use href="#t2"/></svg><svg class="ic g37"><use href="#tech"/></svg>View Technology Sc...</div>
                <div class="row"><svg class="b b2"><use href="#t2"/></svg><svg class="ic g37"><use href="#loop"/></svg>Check Syntax</div>
                <div class="row"><svg class="b b2"><use href="#t2l"/></svg><svg class="ic g37"><use href="#loop"/></svg>Generate Post-Synt...</div>
                <div class="row"><svg class="b"><use href="#tp"/></svg><svg class="ic"><use href="#loop"/></svg><svg class="ic okk"><use href="#ok"/></svg>Implement Design</div>
                <div class="row"><svg class="b"><use href="#tl"/></svg><svg class="ic g37"><use href="#loop"/></svg>Generate Programmin...</div>
                <div class="row"><svg class="b"><use href="#tp"/></svg><svg class="ic g37"><use href="#target"/></svg>Configure Target Device</div>
              </div>
            </div>
            <div class="vsb"><b><svg><use href="#arrU"/></svg></b><div class="vth"><i></i></div><div class="trk"></div><b><svg><use href="#arrD"/></svg></b></div>
          </div>
        </div>
      </div>
      <div class="ltabs">
        <div class="tab t1"><svg class="ic"><use href="#chev"/></svg>Start</div><div class="tab t2 cur"><svg class="ic"><use href="#hier"/></svg>Design</div><div class="tab t3"><svg class="ic"><use href="#files"/></svg>Files</div><div class="tab t4"><svg class="ic"><use href="#libs"/></svg></div>
        <b class="tb dis"><svg><use href="#arrL"/></svg></b><b class="tb"><svg><use href="#arrR"/></svg></b>
      </div>
    </section>
    <div class="vsplit"></div>
    <section class="right">
      <div class="view">
        <div class="strip s3">
          <svg><use href="#selarr"/></svg><svg class="on"><use href="#zoomsel"/></svg><i></i><svg><use href="#stars"/></svg><i></i><svg><use href="#fwd"/></svg><svg class="flip"><use href="#fwd"/></svg><i></i><svg><use href="#newwin"/></svg><svg><use href="#delwin"/></svg><svg><use href="#sym1"/></svg><svg><use href="#sym2"/></svg><i></i><svg><use href="#gateg"/></svg><svg><use href="#texta"/></svg><i></i><svg><use href="#upg"/></svg><svg><use href="#back"/></svg><svg><use href="#fwdg"/></svg><svg><use href="#histg"/></svg><i></i><svg><use href="#pairg"/></svg><svg><use href="#mark"/></svg>
        </div>
        <svg class="canvas" width="1214" height="568" viewBox="384 122 1214 568">
          <rect x="384" y="122" width="1214" height="568"/>
          <g class="wire">
            <path class="gy" d="M533.500 211.500h915v390h-915z"/>
            <path class="gn" d="M598 374.500h41M776 374.500h41M598 416.500h41M776 416.500h41M902 395.500h41M1081 385.500h41M1186 385.500h41M1344 385.500h42"/>
            <path class="rd" d="M639 374.500h137M639 416.500h137M943 395.500h63.500v-10h74.500M1227 385.500h117"/>
            <path class="cy" d="M597.500 290.500h788v232h-788zM554 374.500h43M554 416.500h43M1386 385.500h42"/>
            <path class="cf" d="M597 290h22l-22 22zM1386 290v22l-22-22zM597 523v-22l22 22zM1386 523h-22l22-22z"/>
            <path class="gn" d="M879 364.500h-61.500v63h54M1122.500 364v42.500l41.500-21L1122.500 364.500M879 364.500c10 2 23 14 23.500 31 0 18-14 33-30 32.500"/>
            <circle class="gn" cx="1175.500" cy="385.500" r="11"/>
          </g>
          <g class="lbl">
            <text class="c" x="889" y="276" font-size="36.500" textLength="203">nand_gate:1</text>
            <text class="c" x="904" y="560" font-size="36.500" textLength="174">nand_gate</text>
            <text x="823.500" y="345" font-size="32" textLength="71.500">and2</text>
            <text x="737" y="466" font-size="32" textLength="243.500">temp_imp_temp1</text>
            <text x="1133" y="345" font-size="32">inv</text>
            <text x="1086" y="445" font-size="32" textLength="134">c_imp_c1</text>
            <text x="782.500" y="372" font-size="16">I1</text><text x="782.500" y="414" font-size="16">I0</text>
            <text x="922" y="393" font-size="16">O</text><text x="1096" y="382" font-size="16">I</text><text x="1206" y="382" font-size="16">O</text>
            <text class="c2" x="566.500" y="372" font-size="16">b</text><text class="c2" x="566.500" y="414" font-size="16">a</text><text class="c2" x="1406" y="382" font-size="16">c</text>
          </g>
        </svg>
      </div>
      <div class="dtabs">
        <div class="tab d1"><svg class="ic"><use href="#vdoc"/></svg><span>nand_gate.vhd</span><svg class="cx"><use href="#closex"/></svg></div><div class="tab d2"><svg class="ic"><use href="#sigma"/></svg><span>Design Summary (Implemented)</span><svg class="cx"><use href="#closex"/></svg></div><div class="tab d3 cur"><svg class="ic"><use href="#rtl"/></svg><span>nand_gate (RTL1)</span><svg class="cx"><use href="#closex"/></svg></div>
      </div>
    </section>
  </div>
  <div class="hgrip mid"></div>

  <section class="cat">
    <div class="ptitle wide"><span>View by Category</span><div class="pb"><svg><use href="#b1"/></svg><svg><use href="#b2"/></svg><svg><use href="#b3"/></svg><svg><use href="#b4"/></svg></div></div>
    <div class="cols">
      <div class="objs">
        <h2>Design Objects of Top Level Block</h2>
        <div class="three">
          <div class="box"><div class="head ar">Instances<svg><use href="#vdown"/></svg></div><div class="row seld"><svg class="b3"><use href="#tvs"/></svg><svg class="ic"><use href="#red3d"/></svg>nand_gate</div></div>
          <div class="box"><div class="head ar">Pins<svg><use href="#vdown"/></svg></div><div class="row"><svg class="b3"><use href="#tv"/></svg><svg class="ic"><use href="#red3"/></svg>nand_gate</div></div>
          <div class="box"><div class="head ar">Signals<svg><use href="#vdown"/></svg></div><div class="row"><svg class="b3"><use href="#tv"/></svg><svg class="ic"><use href="#red3"/></svg>nand_gate</div></div>
        </div>
      </div>
      <i class="sg"></i>
      <div class="props">
        <h2>Properties of Instance: nand_gate</h2>
        <div class="box tbl">
          <div class="tbody">
            <div class="head th"><span>Name</span><svg><use href="#vup"/></svg><span class="val">Value</span></div>
            <div class="tr"><span>Type</span><span>nand_gate:1</span></div>
            <div class="tr alt"><span>Part</span><span>xc3s50-5-pq208</span></div>
            <div class="tr"><span>OriginalSymbol</span><span>nand_gate</span></div>
          </div>
          <div class="vsb sm"><b><svg><use href="#arrU"/></svg></b><div class="vth"><i></i></div><div class="trk"></div><b><svg><use href="#arrD"/></svg></b></div>
        </div>
      </div>
    </div>
    <div class="btabs">
      <div class="tab e1"><svg class="ic"><use href="#doc"/></svg>Console</div><div class="tab e2"><svg class="ic"><use href="#err"/></svg>Errors</div><div class="tab e3"><svg class="ic"><use href="#warn"/></svg>Warnings</div><div class="tab e4"><svg class="ic"><use href="#find"/></svg>Find in Files Results</div><div class="tab e5 cur"><svg class="ic"><use href="#gridic"/></svg>View by Category</div><div class="fill"></div>
    </div>
  </section>
  <footer><span>Zoom out such that objects become smaller</span><span>[44,0]</span></footer>
</main>
</div>
</body>
</html>
```
FILE: styles.css
```css
* { box-sizing: border-box; }
html, body { margin: 0; width: 1600px; height: 900px; overflow: hidden; }
body { font: 13px/18px "DejaVu Sans", sans-serif; color: #000; background: #efebe7; display: flex; flex-direction: column; white-space: nowrap; }
svg { display: block; flex: none; }
.defs { position: absolute; }
i, em { font-style: normal; flex: none; display: block; }

/* desktop bar */
.topbar { height: 27px; flex: none; background: #131313; color: #e8e8e8; display: flex; align-items: center; font: 15px/27px "Noto Sans", "Open Sans", sans-serif; }
.activities { width: 99px; padding-left: 18px; font-size: 14.2px; }
.appmark { margin: 0 6px 0 17px; }
.topbar .appname { width: 654px; font-size: 14.2px; }
.clock { width: 105px; font-size: 14.3px; }
.bell { margin-left: -2px; }
.tray { margin-left: auto; padding-right: 19px; display: flex; gap: 12px; align-items: center; }
.shell { flex: 1; display: flex; min-height: 0; }

/* launcher */
.dock { width: 70px; flex: none; background: linear-gradient(#412329, #3a1e28 35%, #2d1728 70%, #270f25); border-right: 1px solid #150a12; padding: 12px 0 6px; display: flex; flex-direction: column; }
.di { height: 62px; flex: none; display: flex; align-items: center; justify-content: center; position: relative; }
.dn { padding-top: 2px; }
.up { padding-bottom: 4px; }
.di.act { width: 60px; margin-left: 5px; height: 60px; margin-bottom: 1px; margin-top: 1px; background: #5a454f; border-radius: 10px; }
.dots { position: absolute; left: 5px; top: 0; bottom: 0; display: flex; flex-direction: column; justify-content: center; gap: 3px; }
.act .dots { left: 0; }
.dots b { width: 5px; height: 5px; border-radius: 50%; background: #7764d8; }
.dsep { width: 44px; height: 1px; border: 0; background: #7c666c; margin: 9px 0 8px 13px; flex: none; }
.apps { margin-top: auto; }

.window { flex: 1; min-width: 0; display: flex; flex-direction: column; background: #efebe7; }
.titlebar { height: 37px; flex: none; background: #222; border-top: 1px solid #383838; border-bottom: 1px solid #0b0b0b; display: flex; align-items: center; padding: 0 7px 0 411px; }
.ttl { font: bold 14px/35px "Noto Sans", "Open Sans", sans-serif; letter-spacing: .165px; color: #fff; width: 725px; }
.wbtns { margin-left: auto; display: flex; gap: 12px; }
.menubar { height: 26px; flex: none; background: linear-gradient(#efebe7, #e3dfda); border-bottom: 1px solid #c9c4bf; display: flex; align-items: center; padding-left: 1px; }
.menubar span { padding: 1px 12.400px 0 0; }
.mic { margin-right: 5px; }
.mdi { margin-left: auto; display: flex; gap: 1px; align-self: flex-start; padding: 2px 2px 0 0; }
.mdi b { width: 18px; height: 17px; border: 1px solid #8e8b88; border-radius: 3px; display: grid; place-items: center; background: #f6f4f2; }
.mdi b:last-child { margin-left: 2px; }

.toolbar { height: 30px; flex: none; display: flex; border-top: 1px solid #fff; border-bottom: 1px solid #c5c1bc; }
.tg { border-right: 1px solid #c5c1bc; display: flex; align-items: center; padding: 0 0 0 4px; box-shadow: 1px 0 #fff; flex: none; }
.tg svg { width: 29px; height: 26px; padding: 5px 6.500px; }
.tg svg.hot { background: #fdfcfb; border: 1px solid #8b8885; border-radius: 3px; width: 27px; margin: 0 1px; padding: 4px 4.500px; }
.tg svg.on { background: #cfcac4; border: 1px solid #8b8885; border-radius: 3px; width: 27px; margin: 0 0 0 1px; padding: 4px 4.500px; }
.grip { width: 5px; height: 16px; background: repeating-linear-gradient(#a9a6a2 0 1px, #fbfaf9 1px 2px, #efebe7 2px 3px); }
.vs { width: 2px; height: 16px; border-left: 1px solid #cdc9c4; border-right: 1px solid #fff; margin: 0 3px; }
.w1 { width: 162px; } .w2 { width: 185px; } .w3 { width: 220px; } .w4 { width: 124px; } .w5 { width: 67px; } .w6 { width: 96px; padding-left: 5px; } .w7 { border: 0; box-shadow: none; }
.more { font: bold 14px/20px "DejaVu Sans", sans-serif; margin-left: 12px; }

.work { height: 599px; flex: none; display: flex; }
.left { width: 277px; flex: none; display: flex; flex-direction: column; }
.ptitle { height: 20px; flex: none; margin: 0 1px; border: 1px solid #c9c5c0; border-left-color: #fff; display: flex; align-items: center; padding-left: 3px; line-height: 16px; }
.ptitle span { margin-top: -3px; }
.pb { margin-left: auto; display: flex; gap: 3px; }
.pb svg { width: 13px; height: 12px; }
.upper { height: 295px; display: flex; flex: none; }
.strip { display: flex; flex-direction: column; align-items: center; flex: none; border-right: 1px solid #c5c1bc; border-top: 1px solid #fff; }
.strip svg { width: 28px; height: 30px; padding: 7px 6px; }
.strip i { width: 15px; height: 2px; border-top: 1px solid #cdc9c4; border-bottom: 1px solid #fff; margin: 3px 0; }
.s1, .s2 { width: 29px; }
.s1 svg { height: 29.900px; padding: 6px 6px 8px; }
.pane { flex: 1; min-width: 0; display: flex; flex-direction: column; padding-left: 1px; }
.viewrow { height: 24px; flex: none; display: flex; align-items: center; padding: 0 2px 0 3px; }
.viewrow span { height: 18px; }
.ic { width: 16px; height: 16px; }
.radio { width: 12px; height: 12px; border: 1px solid #858280; border-radius: 50%; background: #fff; margin: 0 6px 0 0; }
.radio.sel { background: radial-gradient(#333 0 2.500px, #e8e6e4 3.500px); margin: 0 6px 0 1px; }
.v1 { width: 82px; margin: 0 4px; }
.c2 { margin-right: 4px; }
.v2 { width: 48px; }
.box { background: #fff; border: 1px solid #aaa6a1; box-shadow: inset 0 0 0 1px #fbfaf9; overflow: hidden; min-width: 0; }
.head { height: 27px; background: #efebe7; border-bottom: 1px solid #b0aca7; padding: 4px 0 0 4px; line-height: 19px; }
.head.hh { height: 26px; }
.hbox { flex: 1; display: flex; flex-direction: column; }
.tree { flex: 1; min-height: 0; overflow: hidden; }
.row { height: 18px; display: flex; align-items: center; overflow: hidden; line-height: 17px; }
.row .b { width: 24px; height: 18px; }
.row .b2 { width: 44px; }
.row .b + .ic { margin-left: -1px; }
.g21 { margin-right: 6px; } .g37 { margin-right: 22px; }
.okk { margin-right: 6px; }
.vh { width: 31px; margin-right: 7px; }
.seld { background: #918d7e; color: #fff; }
.hsb, .vsb { display: flex; flex: none; background: #efebe7; }
.hsb { height: 16px; padding: 0 0 1px; }
.hsb b, .vsb b { width: 15px; height: 15px; border: 1px solid #8b8885; border-radius: 3px; background: linear-gradient(#fff, #ece9e5); display: grid; place-items: center; flex: none; }
.hsb svg, .vsb svg, .tb svg { width: 8px; height: 8px; }
.hth { width: 152px; border: 1px solid #8b8885; background: linear-gradient(#fcfbfa, #e6e2dd); display: grid; place-items: center; }
.hth i { width: 8px; height: 7px; background: repeating-linear-gradient(90deg, #b5b1ac 0 1px, #fff 1px 2px, #efebe7 2px 3px); }
.trk { flex: 1; background: #d6cdc4; border: 1px solid #8b8885; border-width: 1px 0; }
.hgrip { height: 7px; flex: none; display: grid; place-items: center; }
.hgrip::before { content: ""; width: 40px; height: 4px; background: repeating-linear-gradient(90deg, #b5b1ac 0 1px, #fbfaf9 1px 2px, #efebe7 2px 3px); }
.hgrip.up1 { height: 6px; padding-right: 4px; }
.lower { height: 253px; flex: none; display: flex; }
.s2 svg:not(:first-child) { padding: 6px 6px 8px; }
.status { height: 32px; flex: none; display: flex; align-items: center; padding: 0 0 1px 5px; gap: 10px; }
.pbox { flex: 1; display: flex; min-height: 0; }
.plist { flex: 1; min-width: 0; display: flex; flex-direction: column; }
.plist .tree { margin-bottom: 2px; }
.head.hs { height: 26px; overflow: hidden; flex: none; box-shadow: inset -2px 0 #efebe7, inset -3px 0 #c5c1bc; }
.vsb { width: 15px; flex-direction: column; margin: 1px 1px 1px 0; }
.vsb .trk { border-width: 0 1px; }
.vth { height: 156px; border: 1px solid #8b8885; background: linear-gradient(90deg, #fcfbfa, #e6e2dd); display: grid; place-items: center; }
.vth i { width: 7px; height: 8px; background: repeating-linear-gradient(#b5b1ac 0 1px, #fff 1px 2px, #efebe7 2px 3px); }

.tab { display: flex; align-items: center; background: linear-gradient(#c8c3be, #e9e5e1); border: 1px solid #8b8885; border-left: 0; height: 24px; border-radius: 0 0 3px 3px; box-shadow: inset 1px 0 #f5f3f1; flex: none; overflow: hidden; padding-bottom: 2px; }
.tab.cur { background: #f1eeea; height: 26px; border-top: 0; border-left: 0; border-bottom: 3px solid #5280ad; padding-bottom: 0; }
.ltabs { display: flex; padding: 1px 0 0 1px; height: 27px; flex: none; }
.ltabs .tab.cur { height: 25px; }
.t1 { width: 73px; padding-left: 5px; gap: 11px; } .t2 { width: 85px; padding-left: 5px; gap: 11px; } .t3 { width: 72px; padding-left: 7px; gap: 11px; } .t4 { width: 14px; padding-left: 6px; }
.t4 svg { width: 8px; }
.tb { width: 16px; height: 24px; border: 1px solid #8b8885; border-radius: 3px; background: linear-gradient(#fff, #e9e5e1); display: grid; place-items: center; flex: none; }
.tb.dis { border-color: #bbb; fill: #aaa; }

.vsplit { width: 6px; flex: none; display: grid; place-items: start center; padding-top: 278px; }
.vsplit::before { content: ""; width: 4px; height: 40px; background: repeating-linear-gradient(#b5b1ac 0 1px, #fbfaf9 1px 2px, #efebe7 2px 3px); }
.right { flex: 1; min-width: 0; display: flex; flex-direction: column; }
.view { height: 573px; flex: none; display: flex; border-bottom: 1px solid #8b8885; }
.s3 { width: 28px; border-left: 1px solid #fff; margin-right: 2px; }
.s3 svg { padding: 6px 6px 8px; }
.s3 svg.on { background: #cfcac4; border: 1px solid #8b8885; border-radius: 3px; height: 26px; margin: 1px 0 3px; padding: 4px 5px; }
.flip { transform: scaleX(-1); }
.canvas { margin: 2px 0 0 1px; outline: 1px solid #8f8c88; }
.wire { shape-rendering: crispEdges; fill: none; stroke-width: 1; }
.gy { stroke: #7f7f7f; } .gn { stroke: #0f0; } .rd { stroke: #f00; } .cy { stroke: #0ff; } .cf { fill: #0ff; }
.lbl { font-family: "Liberation Sans", sans-serif; fill: #0f0; }
.lbl .c { fill: #0ff; } .lbl .c2 { fill: #00f0c8; }
.dtabs { display: flex; height: 26px; padding-left: 1px; }
.dtabs span { flex: 1; text-align: center; }
.cx { width: 14px; height: 14px; margin-right: 9px; }
.d1 { width: 311px; } .d2 { width: 313px; } .d3 { width: 309px; }
.dtabs .tab { padding: 0 0 1px 5px; }
.dtabs .cur { padding-top: 2px; }
.dtabs .d1 span { padding-right: 2px; }
.dtabs .d2 .cx { margin-right: 11px; }
.dtabs .d3 .cx { margin-right: 8px; }
.mid { padding-right: 4px; }

.cat { height: 150px; flex: none; display: flex; flex-direction: column; }
.wide { height: 19px; margin-right: 0; }
.wide span { margin-top: -1px; }
.cols { display: flex; height: 107px; flex: none; padding-left: 4px; }
.objs { width: 754px; flex: none; }
h2 { margin: 0; padding-top: 1px; font: bold 13px/18px "DejaVu Sans", sans-serif; text-align: center; height: 25px; }
.objs h2 { padding-right: 1px; }
.three { display: grid; grid-template-columns: repeat(3, 1fr); gap: 6px; }
.three .box, .tbl { height: 77px; padding: 1px; }
.ar { display: flex; justify-content: space-between; align-items: flex-start; padding: 3px 10px 0 4px; height: 25px; box-shadow: inset -2px 0 #efebe7, inset -3px 0 #c5c1bc; }
.ar svg, .th svg { width: 10px; height: 8px; margin-top: 6px; }
.b3 { width: 22px; height: 18px; }
.three .ic { margin: 0 6px 0 1px; }
.sg { width: 5px; height: 40px; margin: 33px 5px 0 4px; background: repeating-linear-gradient(#b5b1ac 0 1px, #fbfaf9 1px 2px, #efebe7 2px 3px); }
.props { flex: 1; padding-right: 4px; min-width: 0; }
.tbl { display: flex; }
.tbody { flex: 1; overflow: hidden; }
.th { display: flex; height: 26px; padding-top: 3px; }
.th span:first-child { width: 345px; }
.th .val { margin-left: 7px; padding-left: 5px; border-left: 1px solid #c5c1bc; flex: 1; border-right: 1px solid #c5c1bc; height: 20px; }
.tr { height: 18px; display: flex; padding-left: 3px; }
.tr span:first-child { width: 368px; }
.alt { background: #e7e6e3; }
.sm { margin: 0; }
.sm .vth { height: 27px; }
.btabs { display: flex; height: 24px; padding-left: 1px; }
.e1 { width: 92px; padding-left: 5px; gap: 11px; } .e2 { width: 80px; padding-left: 7px; gap: 11px; } .e3 { width: 102px; padding-left: 6px; gap: 12px; } .e4 { width: 171px; padding-left: 7px; gap: 11px; } .e5 { width: 155px; padding-left: 4px; gap: 11px; }
.fill { flex: 1; border-top: 1px solid #8b8885; }
footer { height: 24px; display: flex; justify-content: space-between; padding: 3px 5px 0 6px; }
footer span:last-child { padding-top: 1px; }
```
